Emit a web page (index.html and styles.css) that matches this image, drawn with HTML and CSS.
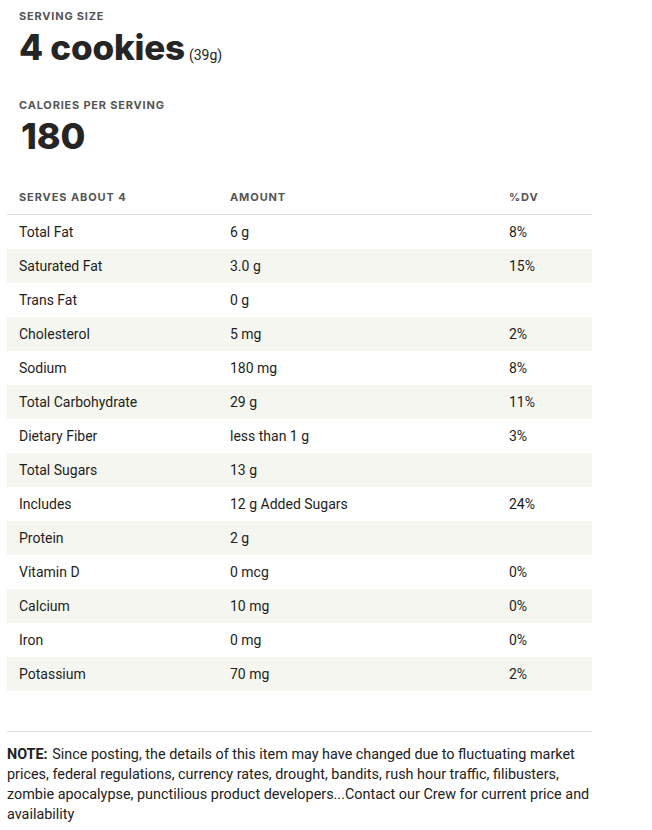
FILE: index.html
```html
<!DOCTYPE html>
<html>
<head>
<meta charset="utf-8">
<link rel="stylesheet" href="styles.css">
</head>
<body>
<div class="page">
  <section class="summary">
    <div class="label">SERVING SIZE</div>
    <div class="big">4 cookies<span class="small">(39g)</span></div>
  </section>
  <section class="summary cal">
    <div class="label">CALORIES PER SERVING</div>
    <div class="big num">180</div>
  </section>
  <table class="facts">
    <thead>
      <tr><th class="c1">SERVES ABOUT 4</th><th class="c2">AMOUNT</th><th class="c3">%DV</th></tr>
    </thead>
    <tbody>
      <tr><td>Total Fat</td><td>6 g</td><td>8%</td></tr>
      <tr><td>Saturated Fat</td><td>3.0 g</td><td>15%</td></tr>
      <tr><td>Trans Fat</td><td>0 g</td><td></td></tr>
      <tr><td>Cholesterol</td><td>5 mg</td><td>2%</td></tr>
      <tr><td>Sodium</td><td>180 mg</td><td>8%</td></tr>
      <tr><td>Total Carbohydrate</td><td>29 g</td><td>11%</td></tr>
      <tr><td>Dietary Fiber</td><td>less than 1 g</td><td>3%</td></tr>
      <tr><td>Total Sugars</td><td>13 g</td><td></td></tr>
      <tr><td>Includes</td><td>12 g Added Sugars</td><td>24%</td></tr>
      <tr><td>Protein</td><td>2 g</td><td></td></tr>
      <tr><td>Vitamin D</td><td>0 mcg</td><td>0%</td></tr>
      <tr><td>Calcium</td><td>10 mg</td><td>0%</td></tr>
      <tr><td>Iron</td><td>0 mg</td><td>0%</td></tr>
      <tr><td>Potassium</td><td>70 mg</td><td>2%</td></tr>
    </tbody>
  </table>
  <hr class="rule">
  <p class="note"><b>NOTE:</b> Since posting, the details of this item may have changed due to fluctuating market prices, federal regulations, currency rates, drought, bandits, rush hour traffic, filibusters, zombie apocalypse, punctilious product developers...Contact our Crew for current price and availability</p>
</div>
</body>
</html>
```

FILE: styles.css
```css
html, body { margin: 0; padding: 0; background: #fff; }
body { font-family: Roboto, "Liberation Sans", sans-serif; color: #222; }
.page { padding: 0 7px; width: 585px; }
.summary { padding: 8px 12px 0; }
.label {
  font-family: Inter, "Liberation Sans", sans-serif;
  font-size: 11px; font-weight: 700; letter-spacing: 0.8px; color: #555;
  line-height: 16px;
}
.big {
  font-family: Inter, "Liberation Sans", sans-serif;
  font-size: 35px; font-weight: 800; color: #252525; line-height: 40px;
  letter-spacing: -0.2px; margin-top: 3px;
}
.small { font-family: Roboto, sans-serif; font-size: 14px; font-weight: 400; letter-spacing: 0; margin-left: 4px; }
.cal { padding-top: 22px; }
.num { font-size: 36px; padding-left: 2px; }
.facts { width: 100%; border-collapse: collapse; margin-top: 24px; font-size: 14px; }
.facts th {
  font-family: Inter, "Liberation Sans", sans-serif;
  text-align: left; font-size: 11px; font-weight: 700; letter-spacing: 0.9px; color: #555;
  height: 34px; padding: 0 12px; border-bottom: 1px solid #ddd;
}
.c1 { width: 187px; } .c2 { width: 255px; }
.facts td { height: 34px; padding: 0 12px; color: #1e1e1e; }
.facts tbody tr:nth-child(even) { background: #f5f6f0; }
.rule { border: 0; border-top: 1px solid #ddd; margin: 40px 0 0; }
.note { margin: 13px 0 0; font-size: 14.4px; line-height: 20px; color: #222; }
.note b { font-weight: 700; margin-right: 1px; }
```
